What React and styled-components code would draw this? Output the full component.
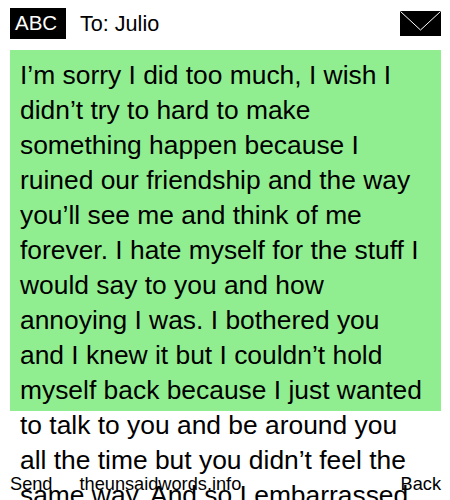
import React from "react";
import styled, { createGlobalStyle } from "styled-components";

const GlobalStyle = createGlobalStyle`
    html, body {
        margin: 0;
        height: 100%;
        background: #fff;
        overflow: hidden;
    }
`;

const Phone = styled.div`
    position: relative;
    width: 450px;
    height: 500px;
    overflow: hidden;
    color: #000;
    font-family: "Liberation Sans", Arial, sans-serif;
`;

const Header = styled.header`
    display: flex;
    align-items: center;
    height: 31px;
    padding: 8px 9px 11px 10px;
`;

const InputMode = styled.div`
    box-sizing: border-box;
    width: 56px;
    height: 31px;
    padding-left: 5px;
    background: #000;
    color: #fff;
    font-size: 20.5px;
    line-height: 30px;
`;

const Recipient = styled.div`
    margin-left: 14px;
    font-size: 21.6px;
`;

const Envelope = styled.svg`
    margin-left: auto;
    width: 41px;
    height: 25px;
    display: block;
`;

const Message = styled.main`
    box-sizing: border-box;
    width: 431px;
    height: 361px;
    margin-left: 10px;
    padding: 8px 14px 8px 10px;
    background: #90ee90;
    font-size: 26.4px;
    line-height: 35px;
`;

const Footer = styled.footer`
    position: absolute;
    left: 10px;
    right: 9px;
    bottom: 5px;
    display: flex;
    font-size: 18.2px;
    line-height: 21px;
`;

const Site = styled.span`
    margin-left: 27px;
`;

const Back = styled.span`
    margin-left: auto;
`;

export default function App() {
    return (
        <Phone>
            <GlobalStyle />
            <Header>
                <InputMode>ABC</InputMode>
                <Recipient>To: Julio</Recipient>
                <Envelope viewBox="0 0 41 25">
                    <rect width="41" height="25" fill="#000" />
                    <path d="M0.5 0.5 L20.5 19 L40.5 0.5" fill="none" stroke="#fff" strokeWidth="1" />
                </Envelope>
            </Header>
            <Message>
                I’m sorry I did too much, I wish I didn’t try to hard to make something happen because I ruined our friendship and the way you’ll see me and think of me forever. I hate myself for the stuff I would say to you and how annoying I was. I bothered you and I knew it but I couldn’t hold myself back because I just wanted to talk to you and be around you all the time but you didn’t feel the same way. And so I embarrassed
            </Message>
            <Footer>
                <span>Send</span>
                <Site>theunsaidwords.info</Site>
                <Back>Back</Back>
            </Footer>
        </Phone>
    );
}
